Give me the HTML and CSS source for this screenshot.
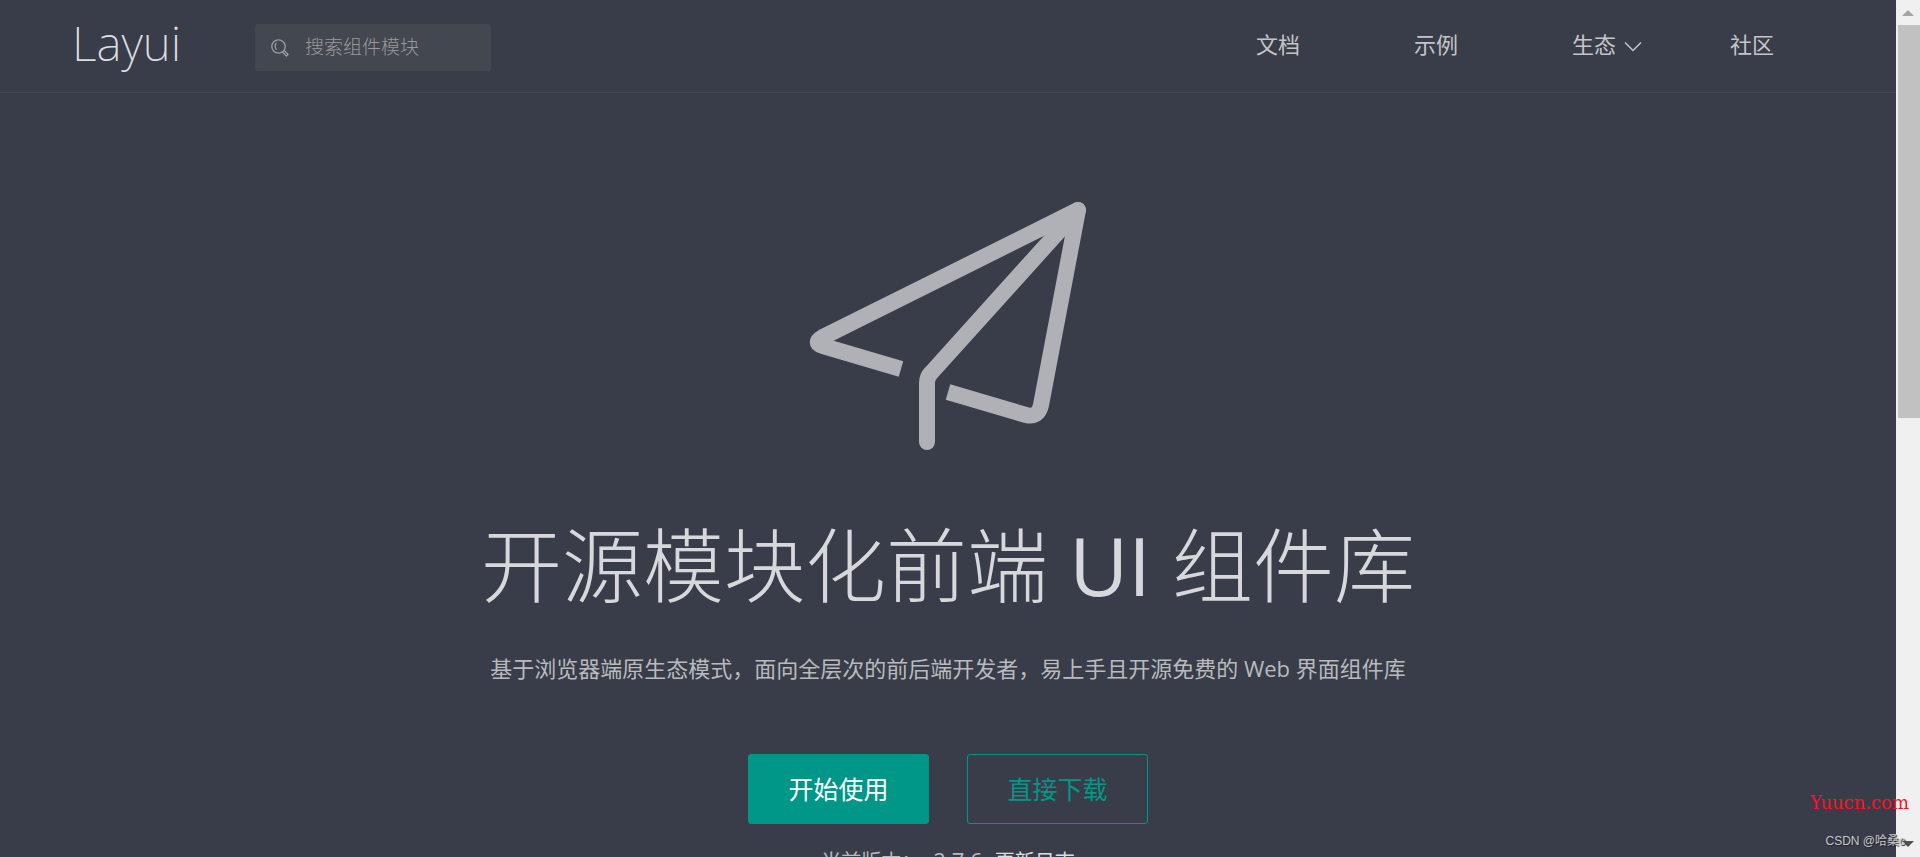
FILE: index.html
```html
<!DOCTYPE html>
<html lang="zh-CN">

<head>
    <meta charset="UTF-8">
    <title>Layui - 开源模块化前端 UI 组件库</title>
    <meta name="viewport" content="width=device-width, initial-scale=1.0">
    <link rel="stylesheet" href="styles.css">
</head>

<body>
    <div class="page">
        <header class="header">
            <a href="#" class="logo">Layui</a>
            <label class="search">
                <svg class="search-icon" viewBox="0 0 18 18" aria-hidden="true">
                    <circle cx="7.5" cy="7.5" r="6.7" />
                    <path d="M5.500 4C3.700 5.500 3.700 9 5.500 10.800M11.300 13L15.500 17L17 15.500L13 11.300" />
                </svg>
                <input type="text" class="search-input" placeholder="搜索组件模块" aria-label="搜索组件模块">
            </label>
            <nav class="main-nav">
                <a href="#">文档</a>
                <a href="#">示例</a>
                <a href="#">生态
                    <svg class="nav-arrow" viewBox="0 0 18 12" aria-hidden="true">
                        <path d="M1 1.500L9 9.500L17 1.500" />
                    </svg>
                </a>
                <a href="#">社区</a>
            </nav>
        </header>

        <main class="banner">
            <svg class="banner-logo" viewBox="0 0 278 250" aria-hidden="true">
                <path d="M92 168L14 145C7 143 7 140 14 136L269 9L232 204C230 213 225 216 217 214L139 191" />
                <path class="banner-logo-tail" d="M269 9L122 172C119 175 118 178 118 182V241" />
            </svg>
            <h1 class="banner-title">开源模块化前端 <span>UI</span> 组件库</h1>
            <p class="banner-desc">基于浏览器端原生态模式，面向全层次的前后端开发者，易上手且开源免费的 Web 界面组件库</p>
            <div class="banner-buttons">
                <a href="#" class="btn btn-start">开始使用</a>
                <a href="#" class="btn">直接下载</a>
            </div>
            <p class="version">当前版本：v<span class="version-number">2.7.6</span><a href="#">更新日志</a></p>
        </main>
    </div>

    <div class="scrollbar" aria-hidden="true">
        <svg class="scroll-arrow" viewBox="0 0 12 6"><path d="M0 6L6 0L12 6Z" /></svg>
        <div class="scroll-track">
            <div class="scroll-thumb"></div>
        </div>
        <svg class="scroll-arrow scroll-down" viewBox="0 0 12 6"><path d="M0 0L6 6L12 0Z" /></svg>
    </div>

    <div class="site-mark">Yuucn.com</div>
    <div class="author-mark">CSDN @哈桑c</div>
</body>

</html>
```
FILE: styles.css
```css
* {
    box-sizing: border-box;
}

body {
    display: flex;
    height: 100vh;
    margin: 0;
    overflow: hidden;
    position: relative;
    background: #393d49;
    color: #b8babe;
    font-family: "Open Sans", "Noto Sans CJK SC", sans-serif;
}

a {
    color: inherit;
    text-decoration: none;
}

.page {
    flex: 1;
    min-width: 0;
}

/* header */
.header {
    display: flex;
    align-items: center;
    height: 93px;
    padding: 0 58px 0 72px;
    border-bottom: 1px solid #434753;
}

.logo {
    width: 183px;
    padding-bottom: 6px;
    color: #dddee1;
    font-family: "Noto Sans", sans-serif;
    font-size: 48px;
    font-weight: 200;
    line-height: 60px;
}

.search {
    display: flex;
    align-items: center;
    gap: 16px;
    width: 236px;
    height: 47px;
    margin-top: 2px;
    padding: 0 16px;
    background: #434750;
    border-radius: 3px;
}

.search-icon {
    flex: none;
    width: 18px;
    height: 18px;
    margin-top: 2px;
    fill: none;
    stroke: #999ca3;
    stroke-width: 1.3;
}

.search-input {
    width: 100%;
    padding: 0;
    background: none;
    border: none;
    outline: none;
    color: #999;
    font-family: inherit;
    font-size: 19px;
    font-weight: 300;
}

.search-input::placeholder {
    color: #999;
}

.main-nav {
    display: flex;
    margin-left: auto;
    padding-bottom: 4px;
}

.main-nav a {
    width: 158px;
    padding-left: 50px;
    color: #c4c5c8;
    font-size: 22px;
    line-height: 32px;
    white-space: nowrap;
}

.nav-arrow {
    width: 18px;
    height: 12px;
    margin-left: 2px;
    fill: none;
    stroke: #c4c5c8;
    stroke-width: 1.5;
}

/* banner */
.banner {
    display: flex;
    flex-direction: column;
    align-items: center;
    padding-top: 108px;
}

.banner-logo {
    width: 278px;
    height: 250px;
    fill: none;
    stroke: #b0b1b6;
    stroke-width: 16;
    stroke-linejoin: round;
}

.banner-logo-tail {
    stroke-linecap: round;
}

.banner-title {
    margin: 54px 0 0;
    color: #d7d8db;
    font-size: 81px;
    font-weight: 300;
    line-height: 120px;
}

.banner-title span {
    font-weight: 400;
}

.banner-desc {
    margin: 26px 0 0;
    font-size: 22px;
    line-height: 34px;
}

.banner-buttons {
    display: flex;
    gap: 38px;
    margin-top: 69px;
}

.btn {
    width: 181px;
    height: 70px;
    border: 1px solid #009688;
    border-radius: 3px;
    color: #009688;
    font-size: 25px;
    line-height: 68px;
    text-align: center;
}

.btn-start {
    background: #009688;
    color: #fff;
}

.version {
    margin: 20px 0 0;
    font-size: 20px;
    line-height: 32px;
}

.version-number {
    margin: 0 12px 0 2px;
    font-size: 22px;
}

.version a {
    color: #dddee1;
}

/* scrollbar */
.scrollbar {
    display: flex;
    flex-direction: column;
    align-items: center;
    width: 24px;
    padding: 10px 0;
    background: #f0f0f0;
}

.scroll-arrow {
    flex: none;
    width: 12px;
    height: 6px;
    fill: #a3a3a3;
}

.scroll-down {
    fill: #505050;
}

.scroll-track {
    flex: 1;
    width: 100%;
    padding: 9px 0 13px 2px;
}

.scroll-thumb {
    height: 49%;
    background: #c1c1c1;
}

/* marks over the page */
.site-mark {
    position: absolute;
    right: 11px;
    bottom: 42px;
    color: #ff0f24;
    font-family: "DejaVu Serif", serif;
    font-size: 18px;
    line-height: 24px;
}

.author-mark {
    position: absolute;
    right: 15px;
    bottom: 6px;
    color: #c6c7ca;
    font-family: "Liberation Sans", "Noto Sans CJK SC", sans-serif;
    font-size: 12px;
    line-height: 20px;
    text-shadow: 1px 1px 1px #222;
}
```
